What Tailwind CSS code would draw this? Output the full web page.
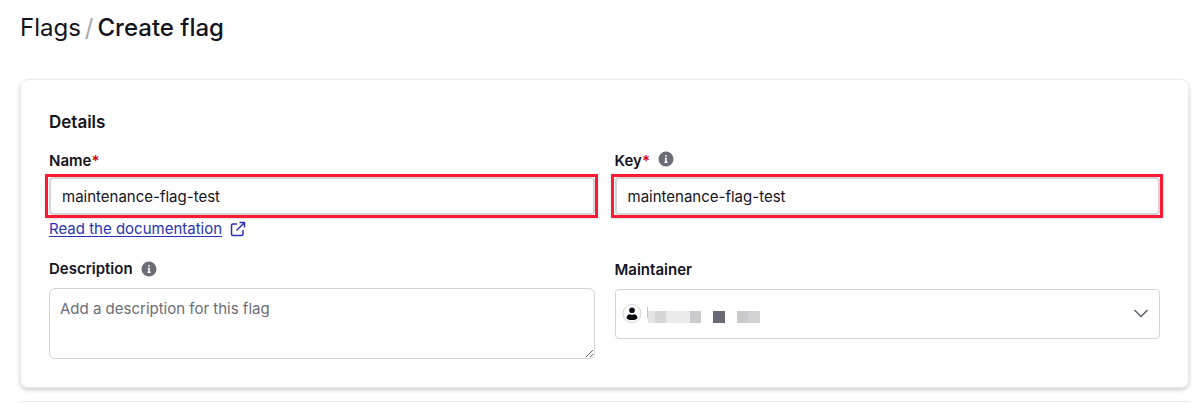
<!DOCTYPE html>
<html lang="en">
<head>
    <meta charset="utf-8" />
    <meta name="viewport" content="width=device-width, initial-scale=1.0" />
    <title>Create flag</title>
    <script src="https://cdn.jsdelivr.net/npm/@tailwindcss/browser@4"></script>
</head>
<body class="min-h-screen flex flex-col bg-white font-['Inter',sans-serif] text-[15px] leading-5 text-[#14141f]">
<nav class="px-5 pt-3 flex gap-1 text-2xl leading-8">
    <a href="#">Flags</a>
    <span class="text-[#a5a8b0]">/</span>
    <h1 class="font-medium">Create flag</h1>
</nav>
<main class="flex-1 flex flex-col pl-5 pr-[11px] pt-[35px]">
    <section class="border border-[#ebebee] rounded-lg shadow-[0_2px_4px_rgba(0,0,0,0.2)] px-7 pt-8 pb-7">
        <h2 class="text-[17px] leading-5 font-semibold">Details</h2>
        <form class="grid grid-cols-2 gap-x-5 mt-4">
            <div>
                <label for="name" class="block h-[29px] pt-[3px] font-semibold">Name<span class="text-[#d8000c]">*</span></label>
                <div class="relative">
                    <input id="name" type="text" value="maintenance-flag-test" class="block w-full h-[38px] border-2 border-[#d3d5d9] rounded px-[11px] outline-none" />
                    <!-- highlight -->
                    <div class="absolute -left-1 -right-[3px] -inset-y-[3px] border-3 border-[#fb1c33] shadow-sm pointer-events-none"></div>
                </div>
                <a href="#" class="mt-1 flex w-fit items-center gap-2 text-[#2a33b5]">
                    <span class="underline underline-offset-2">Read the documentation</span>
                    <svg class="w-4 h-4" viewBox="0 0 16 16" fill="none" stroke="currentColor" stroke-width="1.5">
                        <path d="M7 3H3q-1.500 0-1.500 1.500V13q0 1.500 1.500 1.500h8.500q1.500 0 1.500-1.500V9M9.500 1.500h5v5M14.500 1.500L6.500 9.500" />
                    </svg>
                </a>
            </div>
            <div>
                <div class="flex gap-2 h-[29px] pt-[3px]">
                    <label for="key" class="font-semibold">Key<span class="text-[#d8000c]">*</span></label>
                    <svg class="w-4 h-4" viewBox="0 0 16 16">
                        <circle cx="8" cy="8" r="7.500" fill="#6c6c76" />
                        <path d="M8 4v1.700M6.900 7.500H8v3.500M6.500 11.300h3" stroke="#fff" stroke-width="1.500" fill="none" />
                    </svg>
                </div>
                <div class="relative">
                    <input id="key" type="text" value="maintenance-flag-test" class="block w-full h-[38px] border-2 border-[#d3d5d9] rounded px-[11px] outline-none" />
                    <!-- highlight -->
                    <div class="absolute -left-1 -right-[3px] -inset-y-[3px] border-3 border-[#fb1c33] shadow-sm pointer-events-none"></div>
                </div>
            </div>
            <div class="mt-5">
                <div class="flex items-center gap-2 mb-[9px]">
                    <label for="description" class="font-semibold">Description</label>
                    <svg class="w-4 h-4" viewBox="0 0 16 16">
                        <circle cx="8" cy="8" r="7.500" fill="#6c6c76" />
                        <path d="M8 4v1.700M6.900 7.500H8v3.500M6.500 11.300h3" stroke="#fff" stroke-width="1.500" fill="none" />
                    </svg>
                </div>
                <textarea id="description" placeholder="Add a description for this flag" class="block w-full h-[71px] border border-[#d3d5d9] rounded-md px-[10px] py-[10px] resize-y outline-none placeholder:text-[#6c6c76]"></textarea>
            </div>
            <div class="mt-[21px]">
                <label for="maintainer" class="block font-semibold mb-[9px]">Maintainer</label>
                <div class="relative">
                    <select id="maintainer" class="block w-full h-[50px] border border-[#d3d5d9] rounded appearance-none pl-8 pr-8 outline-none">
                        <option></option>
                    </select>
                    <div class="absolute inset-y-0 left-[7px] flex items-center gap-1 pointer-events-none">
                        <svg class="w-5 h-5" viewBox="0 0 20 20">
                            <circle cx="10" cy="9.500" r="9" fill="#fff" stroke="#d3d5d9" />
                            <circle cx="10" cy="6.300" r="2.800" fill="#0a0a10" />
                            <path d="M4.500 13.700Q5 10.200 8 10.200Q10 11.200 12 10.200Q15 10.200 15.500 13.700Q15 16 10 16T4.500 13.700Z" fill="#0a0a10" />
                        </svg>
                        <!-- redacted name -->
                        <svg class="w-[116px] h-5" viewBox="0 0 116 20" shape-rendering="crispEdges">
                            <path d="M1 3v11" stroke="#c8c8cb" />
                            <path d="M2 7h7v12H2z" fill="#e4e4e5" />
                            <path d="M9 7h11v12H9z" fill="#d6d6d7" />
                            <path d="M20 7h24v12H20z" fill="#ebebec" />
                            <path d="M44 7h11v12H44z" fill="#cbcacc" />
                            <path d="M67 7h12v12H67z" fill="#686a76" />
                            <path d="M91 7h11v12H91z" fill="#cbcacc" />
                            <path d="M102 7h12v12H102z" fill="#d3d3d4" />
                        </svg>
                    </div>
                    <svg class="absolute right-[11px] top-4 w-4 h-4 pointer-events-none" viewBox="0 0 16 16" fill="none" stroke="#5c5f69" stroke-width="1.500">
                        <path d="M1.500 5l6.500 6.500L14.500 5" />
                    </svg>
                </div>
            </div>
        </form>
    </section>
    <section class="flex-1 mt-[13px] border border-b-0 border-[#ebebee] rounded-t-lg"></section>
</main>
</body>
</html>
